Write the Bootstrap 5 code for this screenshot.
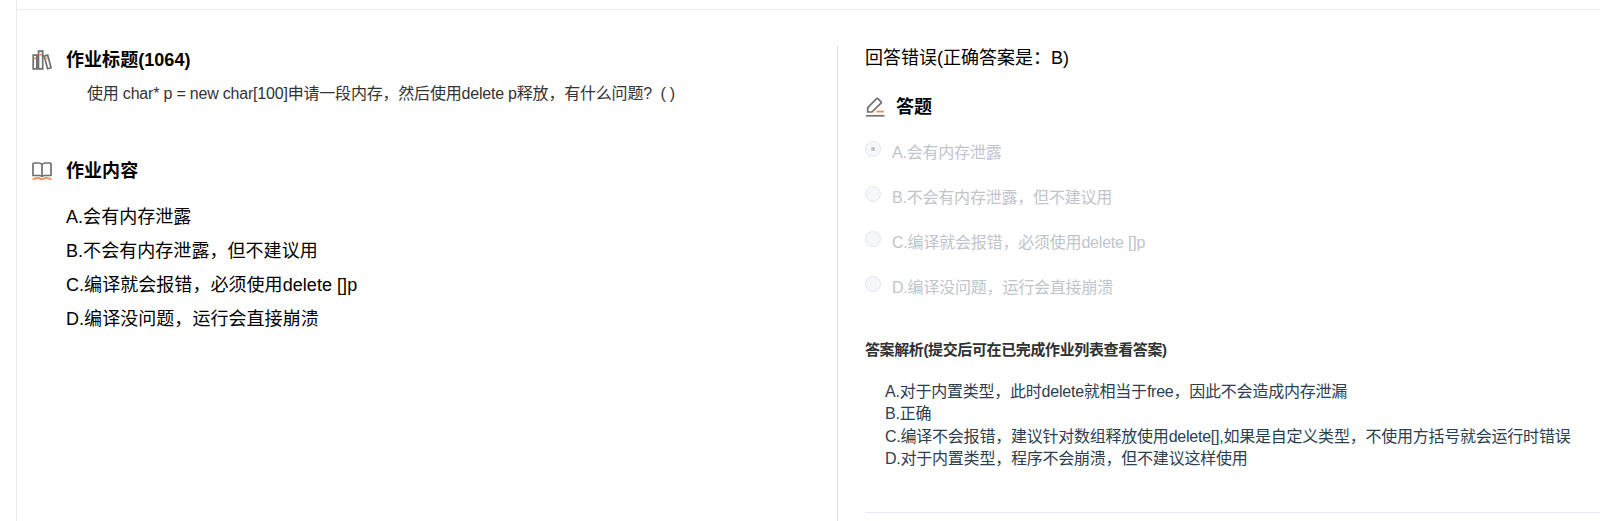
<!DOCTYPE html>
<html lang="zh-CN">
<head>
<meta charset="utf-8">
<meta name="viewport" content="width=device-width, initial-scale=1">
<title>作业</title>
<link href="https://cdn.jsdelivr.net/npm/bootstrap@5.3.0/dist/css/bootstrap.min.css" rel="stylesheet">
<style>
body{font-family:"Liberation Sans","Noto Sans CJK SC",sans-serif;font-size:16px;line-height:24px;color:#000;background:#fff;overflow:hidden;white-space:nowrap}
.page{height:521px;padding-left:16px}
.topbar{height:10px;border-bottom:1px solid #ebebeb}
.frame{border-left:1px solid #ebebeb}
.body-row{height:511px;padding-top:36px}
.left-pane{width:820px;padding:2px 0 0 15px}
.right-pane{border-left:1px solid #dcdcdc;padding-left:27px}
.title{font-size:18px;line-height:24px;font-weight:700;margin:0;letter-spacing:.05px}
.ico{width:20px;height:20px;flex:none;display:block;fill:none;stroke:#707070;stroke-width:1.7}
.ico .hot{stroke:#f98a45}
.gap-title{gap:14px}
.question{color:#333;padding:10px 0 0 55px;margin-bottom:53px;letter-spacing:-.2px}
.choices{font-size:18px;line-height:34px;padding:17px 0 0 34px;letter-spacing:.05px}
.result{font-size:18px}
.answer{margin-top:25px;gap:11px}
.radio-row{height:45px;gap:11px;color:#c0c4cc;letter-spacing:-.2px}
.dot-radio{width:16px;height:16px;border:1px solid #e4e7ed;border-radius:50%;background:#f5f7fa;flex:none}
.dot-radio.on{background:radial-gradient(circle,#c0c4cc 0 1.8px,#f5f7fa 2.4px)}
.radios{padding-top:22px}
.explain-title{font-size:15px;font-weight:700;color:#303133;margin-top:17px;letter-spacing:-.38px}
.explain{color:#2c3e50;line-height:22.4px;padding:19px 0 0 20px;letter-spacing:-.23px}
.rule{border-top:1px solid #e4e9f2;margin-top:41px}
</style>
</head>
<body>
<div class="page">
<div class="frame">
  <div class="topbar"></div>
  <div class="body-row d-flex">
    <section class="left-pane flex-shrink-0">
      <div class="d-flex align-items-center gap-title">
        <svg class="ico" viewBox="0 0 20 20"><path d="M1.2 5.2h3.6v13.6H1.2zM6.5 1.2h4.2v17.6H6.5zM12.2 6.1l3.5-1 3.3 12.6-3.4 1z"/><path class="hot" d="M1.8 8.3h2.4M7.2 4.7h2.8M13.2 8.8l2.5-.7"/></svg>
        <h2 class="title">作业标题(1064)</h2>
      </div>
      <div class="question">使用 char* p = new char[100]申请一段内存，然后使用delete p释放，有什么问题?&nbsp; ( )</div>
      <div class="d-flex align-items-center gap-title">
        <svg class="ico" viewBox="0 0 20 20"><path d="M10 3.6C9.3 2.4 8 2 6.500 2H2Q1 2 1 3v11.500h6Q9 14.500 10 15.500 11 14.500 13 14.500h6V3Q19 2 18 2h-4.500C12 2 10.700 2.400 10 3.600v11.900"/><path class="hot" d="M.6 18.500C4 16.600 7 16.600 8.500 17.800q1.500 1 3 0C13 16.600 16 16.600 19.400 18.500"/></svg>
        <h2 class="title">作业内容</h2>
      </div>
      <div class="choices">
        <div>A.会有内存泄露</div>
        <div>B.不会有内存泄露，但不建议用</div>
        <div>C.编译就会报错，必须使用delete []p</div>
        <div>D.编译没问题，运行会直接崩溃</div>
      </div>
    </section>
    <section class="right-pane flex-grow-1">
      <div class="result">回答错误(正确答案是：B)</div>
      <div class="answer d-flex align-items-center">
        <svg class="ico" viewBox="0 0 20 20"><path d="M2.700 15V10.700L11.600 1.700Q12.200 1.100 12.900 1.700L16 4.800Q16.700 5.500 16 6.200L7 15z"/><path d="M1 18.800h18.500"/><path class="hot" d="M11.500 14.600h7.500"/></svg>
        <h2 class="title">答题</h2>
      </div>
      <div class="radios">
        <div class="radio-row d-flex"><span class="dot-radio on"></span><span>A.会有内存泄露</span></div>
        <div class="radio-row d-flex"><span class="dot-radio"></span><span>B.不会有内存泄露，但不建议用</span></div>
        <div class="radio-row d-flex"><span class="dot-radio"></span><span>C.编译就会报错，必须使用delete []p</span></div>
        <div class="radio-row d-flex"><span class="dot-radio"></span><span>D.编译没问题，运行会直接崩溃</span></div>
      </div>
      <div class="explain-title">答案解析(提交后可在已完成作业列表查看答案)</div>
      <div class="explain">
        <div>A.对于内置类型，此时delete就相当于free，因此不会造成内存泄漏</div>
        <div>B.正确</div>
        <div>C.编译不会报错，建议针对数组释放使用delete[],如果是自定义类型，不使用方括号就会运行时错误</div>
        <div>D.对于内置类型，程序不会崩溃，但不建议这样使用</div>
      </div>
      <div class="rule"></div>
    </section>
  </div>
</div>
</div>
<script src="https://cdn.jsdelivr.net/npm/bootstrap@5.3.0/dist/js/bootstrap.bundle.min.js"></script>
</body>
</html>
